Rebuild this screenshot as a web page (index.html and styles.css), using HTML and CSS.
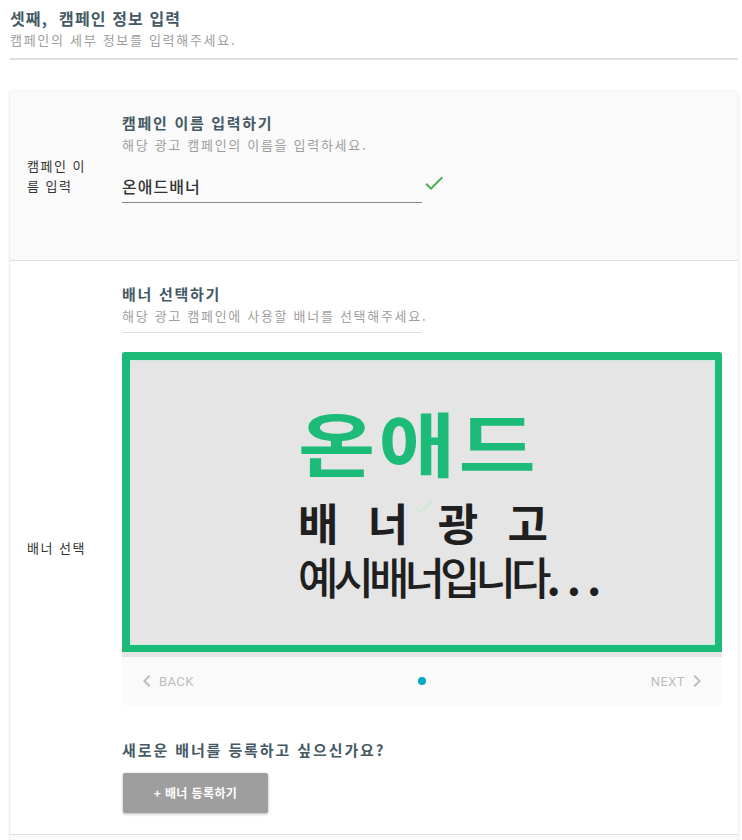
FILE: index.html
```html
<!DOCTYPE html>
<html lang="ko">
<head>
<meta charset="utf-8">
<link rel="stylesheet" href="styles.css">
</head>
<body>
<div class="page">
  <div class="head">
    <div class="head-title">셋째,&nbsp; 캠페인 정보 입력</div>
    <div class="head-sub">캠페인의 세부 정보를 입력해주세요.</div>
  </div>
  <div class="head-divider"></div>

  <div class="card">
    <div class="row row-grey">
      <div class="label">캠페인 이름 입력</div>
      <div class="content">
        <div class="sec-title">캠페인 이름 입력하기</div>
        <div class="sec-sub">해당 광고 캠페인의 이름을 입력하세요.</div>
        <div class="input-wrap">
          <div class="input">온애드배너</div>
          <svg class="check" viewBox="0 0 24 24" width="24" height="24"><path d="M9 16.17L4.83 12l-1.42 1.41L9 19 21 7l-1.41-1.41z" fill="#4caf50"/></svg>
        </div>
      </div>
    </div>

    <div class="row">
      <div class="label">배너 선택</div>
      <div class="content">
        <div class="sec-head">
          <div class="sec-title">배너 선택하기</div>
          <div class="sec-sub">해당 광고 캠페인에 사용할 배너를 선택해주세요.</div>
        </div>
        <div class="banner">
          <div class="frame">
            <div class="inner">
              <div class="bt">
                <div class="b1">온애드</div>
                <div class="b2"><span>배</span><span>너</span><span>광</span><span>고</span></div>
                <div class="b3">예시배너입니다<span class="dots">...</span></div>
              </div>
            </div>
          </div>
          <svg class="faint-check" viewBox="0 0 24 24" width="28" height="28"><path d="M9 16.17L4.83 12l-1.42 1.41L9 19 21 7l-1.41-1.41z" fill="#cfe9da"/></svg>
        </div>
        <div class="stepper">
          <div class="step-btn">
            <svg viewBox="0 0 24 24" width="24" height="24"><path d="M15.41 7.41L14 6l-6 6 6 6 1.41-1.41L10.83 12z" fill="#bdbdbd"/></svg>
            <span>Back</span>
          </div>
          <div class="dot"></div>
          <div class="step-btn">
            <span>Next</span>
            <svg viewBox="0 0 24 24" width="24" height="24"><path d="M10 6L8.59 7.41 13.17 12l-4.58 4.59L10 18l6-6z" fill="#bdbdbd"/></svg>
          </div>
        </div>
        <div class="question">새로운 배너를 등록하고 싶으신가요?</div>
        <div class="btn">+ 배너 등록하기</div>
      </div>
    </div>

    <div class="row row-grey row-last"></div>
  </div>
</div>
</body>
</html>
```

FILE: styles.css
```css
* { box-sizing: border-box; }
html, body { margin: 0; padding: 0; background: #fff; }
body {
  font-family: "Noto Sans CJK KR", "Noto Sans", sans-serif;
  color: #333;
}
.page {
  padding: 7px 4px 0 10px;
  height: 840px;
  overflow: hidden;
}
.head-title {
  font-size: 16px;
  line-height: 22px;
  font-weight: 700;
  color: #455a64;
  letter-spacing: 1.1px;
}
.head-sub {
  font-size: 13px;
  line-height: 22px;
  color: #9e9e9e;
  letter-spacing: 1.7px;
}
.head-divider {
  margin-top: 7px;
  height: 2px;
  background: #e0e0e0;
}
.card {
  margin-top: 31px;
  border-radius: 3px;
  box-shadow: 0 1px 3px rgba(0,0,0,0.12), 0 0 2px rgba(0,0,0,0.08);
  background: #fff;
}
.row {
  display: grid;
  grid-template-columns: 112px 1fr;
  align-items: center;
  border-bottom: 1px solid #e0e0e0;
}
.row-grey { background: #fafafa; border-radius: 3px 3px 0 0; }
.row-last { height: 40px; border-bottom: none; border-radius: 0; }
.label {
  padding: 0 28px 0 17px;
  font-size: 13px;
  line-height: 20px;
  color: #333;
  letter-spacing: 1.5px;
}
.content {
  padding: 21px 16px 57px 0;
}
.row + .row .content { padding: 22px 16px 21px 0; }
.sec-title {
  font-size: 15px;
  line-height: 22px;
  font-weight: 700;
  color: #455a64;
  letter-spacing: 1.7px;
}
.sec-sub {
  font-size: 13px;
  line-height: 22px;
  color: #9e9e9e;
  letter-spacing: 1.7px;
  white-space: nowrap;
}
.input-wrap {
  display: flex;
  align-items: flex-start;
  margin-top: 14px;
}
.input {
  width: 300px;
  height: 33px;
  line-height: 32px;
  font-size: 16px;
  font-weight: 500;
  color: #333;
  letter-spacing: 1px;
  border-bottom: 1px solid #8a8a8a;
}
.check { margin-top: 1px; display: block; }

.sec-head {
  width: 300px;
  padding-bottom: 5px;
  border-bottom: 1px solid #e0e0e0;
}
.banner {
  position: relative;
  margin-top: 19px;
  width: 600px;
  height: 305px;
  background: #e4e4e4;
}
.frame {
  height: 300px;
  background: #1dbb78;
  border-radius: 3px 3px 0 0;
  padding: 8px 7px 7px 8px;
}
.inner {
  height: 100%;
  background: #e5e5e5;
  border: 1px solid #c9ece0;
  display: flex;
  align-items: flex-start;
  padding-left: 167px;
}
.bt { margin-top: 33px; }
.b1 {
  font-size: 84px;
  line-height: 82px;
  font-weight: 700;
  color: #1dbb78;
  letter-spacing: 3px;
  transform: scaleY(0.84);
  transform-origin: left bottom;
  white-space: nowrap;
}
.b2 {
  display: flex;
  justify-content: space-between;
  width: 250px;
  margin-top: 24px;
  font-size: 44px;
  line-height: 44px;
  font-weight: 700;
  color: #1f1f1f;
}
.b3 {
  margin-top: 9px;
  font-size: 44px;
  line-height: 46px;
  font-weight: 500;
  color: #1f1f1f;
  letter-spacing: -5px;
  white-space: nowrap;
}
.dots { letter-spacing: 6px; font-weight: 700; }
.faint-check {
  position: absolute;
  left: 288px;
  top: 140px;
}
.stepper {
  height: 48px;
  background: #fafafa;
  display: flex;
  align-items: center;
  justify-content: space-between;
  padding: 0 13px;
}
.step-btn {
  display: flex;
  align-items: center;
  font-family: Roboto, "Liberation Sans", sans-serif;
  font-size: 13px;
  text-transform: uppercase;
  color: #bdbdbd;
  letter-spacing: 0.4px;
}
.step-btn svg { display: block; }
.dot {
  width: 8px;
  height: 8px;
  border-radius: 50%;
  background: #00acc1;
}
.question {
  margin-top: 34px;
  font-size: 15px;
  line-height: 22px;
  font-weight: 700;
  color: #455a64;
  letter-spacing: 1.9px;
}
.btn {
  margin-top: 12px;
  margin-left: 1px;
  width: 145px;
  height: 40px;
  line-height: 40px;
  text-align: center;
  background: #9e9e9e;
  color: #fff;
  font-size: 12px;
  font-weight: 700;
  letter-spacing: 0.4px;
  border-radius: 2px;
  box-shadow: 0 1px 3px rgba(0,0,0,0.3);
}
```
